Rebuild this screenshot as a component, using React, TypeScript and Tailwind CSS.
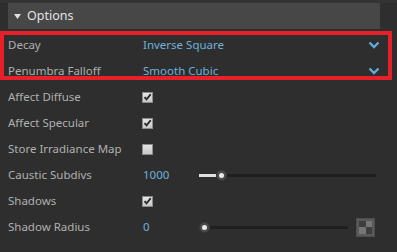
import React from "react";

const font = { fontFamily: '"Segoe UI", "Noto Sans", "Liberation Sans", sans-serif' };

const Chevron = () => (
  <svg width="12" height="8" viewBox="0 0 12 8" className="shrink-0">
    <polyline points="1.5,1.5 6,6 10.5,1.5" fill="none" stroke="#62acd6" strokeWidth="2.4" />
  </svg>
);

const Check = ({ checked }: { checked: boolean }) => (
  <div className="w-[11px] h-[11px] bg-gradient-to-b from-[#e4e4e4] to-[#c8c8c8] border border-[#8c8c8c] flex items-center justify-center">
    {checked && (
      <svg width="9" height="8" viewBox="0 0 9 8">
        <polyline points="1.5,4.2 3.5,6.3 7.8,1.2" fill="none" stroke="#2a2a2a" strokeWidth="1.8" />
      </svg>
    )}
  </div>
);

const Thumb = () => (
  <div className="w-[11px] h-[11px] rounded-full bg-[#4a4a4a] border border-[#3a3a3a] flex items-center justify-center shrink-0">
    <div className="w-[5px] h-[5px] rounded-full bg-[#e8e8e8]" />
  </div>
);

const App = () => {
  const dropdowns = [
    { label: "Decay", value: "Inverse Square" },
    { label: "Penumbra Falloff", value: "Smooth Cubic" },
  ];
  const checks = [
    { label: "Affect Diffuse", checked: true },
    { label: "Affect Specular", checked: true },
    { label: "Store Irradiance Map", checked: false },
  ];

  return (
    <div className="w-[397px] h-[252px] bg-[#2e2e2e] relative overflow-hidden text-[11.5px]" style={font}>
      <div className="h-[3px] bg-[#343434]" />
      <div className="ml-[8px] w-[372px] h-[26px] bg-[#474747] flex items-center text-[#e2e2e2] text-[12.5px]">
        <svg width="7" height="5" viewBox="0 0 7 5" className="ml-[6px] mr-[6px]">
          <polygon points="0,0 7,0 3.5,5" fill="#e2e2e2" />
        </svg>
        Options
      </div>
      <div className="mt-[3px]">
        {dropdowns.map((d) => (
          <div key={d.label} className="h-[26px] flex items-center">
            <div className="w-[143px] pl-[8px] text-[#b0b0b0]">{d.label}</div>
            <div className="w-[225px] text-[#6cb2da]">{d.value}</div>
            <Chevron />
          </div>
        ))}
        {checks.map((c) => (
          <div key={c.label} className="h-[26px] flex items-center">
            <div className="w-[142px] pl-[8px] text-[#b0b0b0]">{c.label}</div>
            <Check checked={c.checked} />
          </div>
        ))}
        <div className="h-[26px] flex items-center">
          <div className="w-[143px] pl-[8px] text-[#b0b0b0]">Caustic Subdivs</div>
          <div className="w-[56px] text-[#6cb2da]">1000</div>
          <div className="w-[177px] flex items-center">
            <div className="w-[17px] h-[3px] bg-[#e0e0e0]" />
            <Thumb />
            <div className="flex-1 h-[3px] bg-[#1f1f1f]" />
          </div>
        </div>
        <div className="h-[26px] flex items-center">
          <div className="w-[142px] pl-[8px] text-[#b0b0b0]">Shadows</div>
          <Check checked />
        </div>
        <div className="h-[26px] flex items-center">
          <div className="w-[143px] pl-[8px] text-[#b0b0b0]">Shadow Radius</div>
          <div className="w-[56px] text-[#6cb2da]">0</div>
          <div className="w-[149px] flex items-center">
            <Thumb />
            <div className="flex-1 h-[3px] bg-[#1f1f1f]" />
          </div>
          <div className="ml-[8px] w-[19px] h-[19px] bg-[#5a5a5a] border border-[#4e4e4e] p-[2px] grid grid-cols-2 grid-rows-2">
            <div className="bg-[#3e3e3e]" />
            <div className="bg-[#767676]" />
            <div className="bg-[#767676]" />
            <div className="bg-[#3e3e3e]" />
          </div>
        </div>
      </div>
      <div className="absolute left-0 top-[31px] w-[392px] h-[49px] border-4 border-[#e8202a]" />
    </div>
  );
};

export default App;
